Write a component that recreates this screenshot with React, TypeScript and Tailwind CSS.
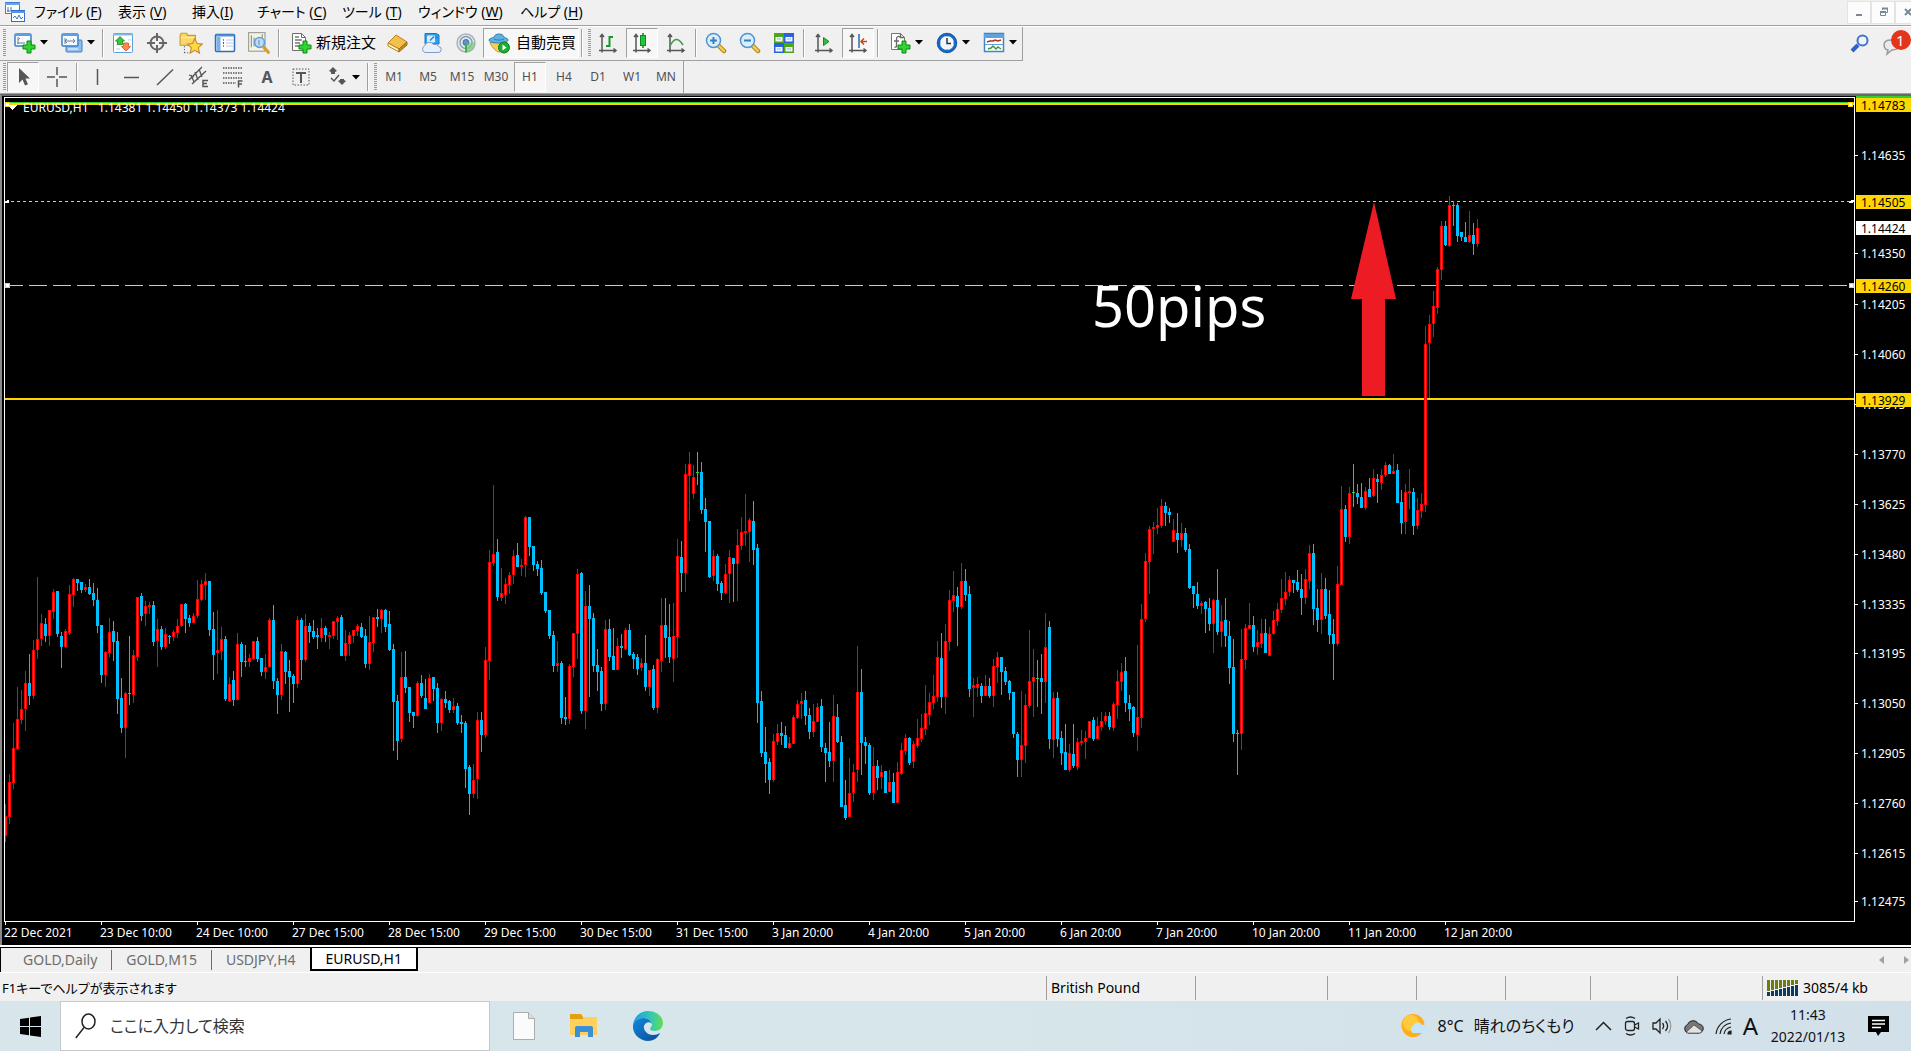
import React from "react";

type Children = { children: React.ReactNode };

/* ---------- Candle data ----------
   One entry per hour: colour letter, then high, body top, body bottom, low.
   Values are depths below the reference level, three units to a pixel. */
const SERIES = `
r1032,1068,1128,1146 r942,966,1071,1092 r789,864,969,987 r681,777,867,870 r690,747,780,792 r633,669,747,813
b582,669,708,735 r540,570,708,717 r351,537,570,597 r462,489,537,558 b474,492,528,546 r450,450,528,558
r387,396,456,477 b393,393,522,531 b516,528,561,624 r507,513,561,564 r375,402,519,525 r354,357,405,441
b357,357,369,393 b366,366,390,399 r372,381,390,396 b357,381,402,405 b369,399,420,438 b384,420,498,519
b495,495,645,669 r573,576,645,681 r474,516,579,591 b483,513,546,603 b516,543,717,762 b654,714,804,819
r696,699,804,894 g528,699,702,735 r570,585,705,729 r411,411,591,603 b399,408,468,483 r423,438,462,498
r426,435,441,462 b423,435,546,558 r477,507,543,621 b498,507,561,570 r504,522,561,567 b525,528,531,552
r510,516,531,543 r477,498,519,534 r432,432,498,501 b429,432,477,519 b465,474,489,501 r459,468,489,489
r360,417,468,474 r360,372,420,423 r339,363,375,420 b363,363,510,528 b456,507,585,660 r450,570,579,642
r501,537,573,600 b528,537,717,723 r651,672,723,726 b633,660,720,738 r519,552,720,720 b546,552,606,651
b555,603,606,621 r582,594,606,621 r543,543,597,600 b531,543,597,606 b594,594,636,648 r582,621,636,657
r474,480,621,621 b435,480,663,687 b654,663,705,762 r552,573,705,720 b573,576,636,672 b600,633,651,756
b642,648,672,729 r468,480,672,684 b474,480,600,660 r462,498,600,606 b489,498,516,549 b480,513,531,537
b504,525,531,567 r474,504,534,546 b498,504,525,546 r516,525,531,567 r483,483,528,537 r468,474,486,540
b465,471,588,588 r510,549,588,603 r516,525,552,588 r510,510,528,549 r492,498,513,528 b489,501,531,534
b507,528,612,624 r468,546,612,630 r471,471,549,576 b447,471,477,501 r447,450,477,519 b447,450,501,516
b453,492,570,573 b552,567,726,873 b705,723,843,900 r576,651,837,846 b573,651,684,699 b681,681,759,786
b756,756,768,804 r663,669,768,771 b645,669,708,714 b657,714,747,747 r642,654,729,729 b651,651,687,723
b669,684,789,819 r714,717,789,813 b693,717,729,744 b720,723,750,759 r714,738,750,759 b729,738,789,795
b765,786,792,819 b783,789,927,984 b915,921,1002,1065 r912,960,1002,1014 r756,780,957,1017 b756,780,825,876
r561,600,825,834 r270,306,603,660 r75,282,309,318 b237,276,411,423 r324,399,414,423 r354,372,405,432
r336,345,375,402 r270,288,345,372 b249,285,321,321 r297,315,321,348 r168,171,315,351 b171,171,261,288
b258,258,315,333 b303,312,327,348 b300,324,399,405 b396,396,453,459 b450,450,528,537 b513,525,618,636
r543,609,618,636 b603,609,774,792 b711,771,777,795 r612,618,777,792 r519,519,621,651 r327,342,522,597
b336,339,753,762 r393,438,753,807 b375,438,477,711 b459,474,618,636 b567,615,636,693 b621,633,732,753
r480,507,732,750 b477,507,591,603 b504,588,630,630 r534,558,630,630 b522,558,564,594 r504,510,567,570
b492,510,585,588 b576,582,597,627 b582,591,627,645 r594,609,624,633 b525,609,681,693 r630,630,681,708
b615,627,744,750 r594,597,744,759 r414,495,603,636 b414,495,534,594 b432,531,591,609 r429,528,597,666
r237,288,531,594 b243,291,339,396 r12,42,339,396 r-24,12,48,183 r15,51,102,117 g-24,36,39,75
b6,36,150,162 b114,147,186,276 b183,183,351,354 r270,288,348,363 b282,288,372,393 b363,369,399,420
r312,342,399,402 r270,291,342,429 b294,294,312,426 r207,255,312,423 r171,216,258,270 r102,213,219,258
r174,180,216,306 b123,183,270,315 b252,264,729,789 b693,723,879,891 b801,876,912,969 b894,906,960,1002
r822,843,960,966 r792,819,846,855 b786,819,828,855 b798,825,864,864 r831,849,864,867 r765,771,852,852
r720,732,774,777 r699,723,732,777 b693,720,768,795 b744,765,816,837 r732,783,816,831 r729,741,786,786
b717,738,861,876 b849,864,879,966 b786,876,903,921 r705,768,903,966 b732,771,846,849 b828,846,1041,1041
b960,1035,1074,1080 r894,999,1071,1071 r912,936,999,1026 r558,696,930,966 b627,696,849,945 b831,846,858,912
b849,855,999,1005 r861,918,999,1020 b900,918,954,990 r915,936,951,987 b933,933,999,999 r930,966,996,996
b939,966,1029,1029 r906,936,1029,1029 r849,870,942,945 r822,834,873,885 b831,834,909,915 r843,852,906,924
r777,834,858,864 r762,804,837,846 r675,759,807,825 r699,726,765,795 r645,708,729,747 r543,591,711,726
b519,594,711,744 r492,543,711,762 r390,420,546,573 r333,405,423,456 b381,408,441,558 r309,363,441,447
b327,363,405,423 b378,402,687,711 r654,675,684,771 r651,672,684,711 b669,678,708,729 r645,678,708,708
b654,678,708,714 r597,618,708,741 r576,591,621,669 b591,591,636,705 b621,633,666,675 b660,663,699,720
b696,696,822,834 b816,822,900,951 r693,855,900,951 r702,735,858,909 r510,663,738,744 r567,651,666,771
g600,654,657,741 b582,654,666,762 r459,561,666,729 b483,501,837,867 r696,714,840,894 b696,714,837,861
b813,834,879,915 b792,876,930,930 r852,879,930,936 b792,882,918,924 r834,846,921,930 r810,843,849,858
r813,834,846,897 r783,783,834,834 b771,780,837,843 r771,798,837,837 r756,783,801,813 r756,768,783,795
b756,768,801,810 r726,732,804,813 r630,663,735,777 r609,636,666,693 b591,633,729,756 b705,729,747,783
b738,741,819,831 r555,771,825,873 r432,477,774,804 r279,303,477,486 r198,207,306,402 r186,201,207,282
r144,195,204,222 r117,138,198,204 b126,138,159,198 b144,156,165,189 r177,210,246,246 b159,219,240,279
r189,219,240,261 b204,219,270,276 b252,267,384,387 b378,378,402,444 b366,402,438,447 r423,429,438,462
b423,426,447,519 b414,444,492,513 r417,420,492,579 b327,420,516,525 r435,483,516,561 b414,480,528,561
b483,528,624,672 b537,621,822,846 b810,819,822,945 r507,597,822,870 r492,504,600,627 r429,495,507,507
b468,495,561,576 r510,546,561,585 r477,519,552,564 b477,519,579,579 r501,522,588,588 r453,480,522,525
r429,447,483,498 r357,414,450,459 r336,396,417,435 r348,360,396,408 b360,360,369,399 b330,366,390,396
b342,387,414,465 r327,357,414,432 r255,279,363,387 b252,279,447,495 b387,444,480,516 r339,387,480,522
b354,387,468,477 b390,462,525,552 b477,522,552,660 r318,372,552,558 r78,147,375,375 b135,147,231,246
r81,99,231,252 g12,96,99,141 b72,99,111,132 b69,111,144,144 r81,93,144,150 b54,87,111,111
r27,54,108,111 b42,57,66,129 r27,45,69,90 r6,15,45,51 b12,15,42,42 r-18,33,42,42
b12,30,129,129 b90,126,189,222 r72,96,186,222 r27,93,99,147 b84,96,198,225 r114,150,198,207
r99,132,153,174 r-402,-348,135,156 r-435,-408,-351,-186 r-507,-462,-408,-369 r-579,-573,-456,-438 r-717,-702,-570,-540
b-717,-702,-645,-642 r-792,-765,-642,-639 b-777,-765,-762,-702 b-771,-765,-672,-654 b-684,-684,-669,-657 b-714,-669,-654,-654
r-747,-675,-654,-651 b-711,-675,-648,-615 r-723,-696,-648,-639`;

const LEVEL = 362;

function buildPaths() {
  const outline: Record<string, string> = { r: "", b: "", g: "" };
  const core: Record<string, string> = { r: "", b: "", g: "" };
  SERIES.trim().split(/\s+/).forEach((entry, i) => {
    const key = entry[0];
    const [hi, top, bottom, lo] = entry.slice(1).split(",").map((v) => LEVEL + Math.round(Number(v) / 3));
    const x = 4 * i;
    outline[key] += `M${x} ${hi}h1V${lo}h-1zM${x - 1} ${top}h3V${bottom}h-3z`;
    if (bottom - top > 2) core[key] += `M${x} ${top + 1}h1V${bottom - 1}h-1z`;
  });
  return { outline, core };
}
const PATHS = buildPaths();

const AXIS_PRICES = [1.14635, 1.1435, 1.14205, 1.1406, 1.13915, 1.1377, 1.13625, 1.1348, 1.13335, 1.13195, 1.1305, 1.12905, 1.1276, 1.12615, 1.12475];
const MARKED = [
  { price: 1.14783, y: 2, fill: "#ffd700" },
  { price: 1.14505, y: 99, fill: "#ffd700" },
  { price: 1.14424, y: 125, fill: "#ffffff" },
  { price: 1.1426, y: 183, fill: "#ffd700" },
  { price: 1.13929, y: 297, fill: "#ffd700" },
];
const DATES = ["22 Dec 2021", "23 Dec 10:00", "24 Dec 10:00", "27 Dec 15:00", "28 Dec 15:00", "29 Dec 15:00", "30 Dec 15:00", "31 Dec 15:00", "3 Jan 20:00", "4 Jan 20:00", "5 Jan 20:00", "6 Jan 20:00", "7 Jan 20:00", "10 Jan 20:00", "11 Jan 20:00", "12 Jan 20:00"];

function priceToY(price: number) {
  return Math.round(59 + (1.14635 - price) * 34560);
}

/* ---------- Shared pieces ---------- */

function Svg({ children, size = 22, label }: Children & { size?: number; label?: string }) {
  return (
    <svg width={size} height={size} viewBox="0 0 22 22" fill="none" className="shrink-0" aria-label={label}>
      {children}
    </svg>
  );
}

function Grip() {
  return (
    <svg width="3" height="28" className="ml-[3px] shrink-0 self-center" shapeRendering="crispEdges" aria-hidden="true">
      {Array.from({ length: 14 }, (_, i) => (
        <rect key={i} x="0" y={i * 2} width="3" height="1" fill="#9a9a9a" />
      ))}
    </svg>
  );
}

function Sep() {
  return <span className="mx-0.5 h-7 w-0.5 shrink-0 self-center border-r border-l border-r-white border-l-[#a0a0a0]" />;
}

function Tool({ label, pressed, children }: Children & { label: string; pressed?: boolean }) {
  return (
    <button type="button" aria-label={label} className="flex w-[34px] shrink-0 items-center justify-center">
      {pressed ? (
        <span className="flex h-[30px] w-8 items-center justify-center border border-t-[#a0a0a0] border-r-white border-b-white border-l-[#a0a0a0] bg-[#f7f7f7]">{children}</span>
      ) : (
        children
      )}
    </button>
  );
}

function DropTool({ label, children }: Children & { label: string }) {
  return (
    <button type="button" aria-label={label} className="flex w-[47px] shrink-0 items-center gap-1 pl-2">
      {children}
      <svg width="8" height="5" className="shrink-0" aria-hidden="true">
        <path d="M0 0h8L4 4.5z" fill="#000" />
      </svg>
    </button>
  );
}

/* ---------- Icons ---------- */

function PlusMark({ x, y }: { x: number; y: number }) {
  return <path d={`M${x + 4} ${y}h4v4h4v4h-4v4h-4v-4h-4v-4h4z`} fill="#2fd42f" stroke="#0a8a14" strokeWidth="1" />;
}

const axes = <path d="M5 2.5v18M2 18.500h17M3 5l2-2.500 2 2.500M16.500 16.500l2.500 2-2.500 2" stroke="#555" strokeWidth="1.500" />;

function AppIcon() {
  return (
    <Svg>
      <rect x="1.500" y="1.500" width="14" height="11" fill="#fff" stroke="#3f7fd0" />
      <path d="M1 3h15" stroke="#6aa2e8" strokeWidth="2" />
      <path d="M4 6v5M3 10h9M7 6v3" stroke="#4472b8" />
      <rect x="7.500" y="9.500" width="13" height="11" fill="#fff" stroke="#2c6fd0" />
      <path d="M7 11h14" stroke="#5b94e6" strokeWidth="2" />
      <path d="M9 17l2-2 2 3 2-4 2 4 2-2" stroke="#4472b8" />
    </Svg>
  );
}
function NewChartIcon() {
  return (
    <Svg>
      <rect x="1" y="2" width="16" height="12" rx="1" fill="#f4faff" stroke="#3b7fc4" strokeWidth="1.500" />
      <path d="M1 3h16" stroke="#5d9fe0" strokeWidth="2" />
      <path d="M4 5v7M3 11h8M4 8l2-2" stroke="#6d8196" />
      <PlusMark x={9} y={9} />
    </Svg>
  );
}
function ProfilesIcon() {
  return (
    <Svg>
      <rect x="5" y="8" width="16" height="12" rx="1" fill="#8fbdf0" stroke="#3b7fc4" />
      <rect x="1" y="2" width="16" height="12" rx="1" fill="#f4faff" stroke="#3b7fc4" strokeWidth="1.500" />
      <path d="M1 3h16" stroke="#5d9fe0" strokeWidth="2" />
      <path d="M4 9h10M4 9l2-2M4 9l2 2M14 9l-2-2M14 9l-2 2M4 6v6" stroke="#6d8196" />
      <path d="M7 17h10" stroke="#fff" />
    </Svg>
  );
}
function MarketIcon() {
  return (
    <Svg>
      <rect x="1.500" y="1.500" width="19" height="19" rx="1" fill="#fff" stroke="#5b9fdd" />
      <path d="M1 2.500h20" stroke="#7db8ee" strokeWidth="2" />
      <path d="M4 10h2M4 13h2M16 8h3M4 17h4" stroke="#c5cdd6" />
      <path d="M8 4.500l4.500 4.500h-2v3.500h-5V9h-2z" fill="#3fc43f" stroke="#138a18" strokeWidth=".8" />
      <path d="M14 19l-4.500-4.500h2V11h5v3.500h2z" fill="#ff8a50" stroke="#d4501a" strokeWidth=".8" />
    </Svg>
  );
}
function DataIcon() {
  return (
    <Svg>
      <circle cx="11" cy="11" r="6.500" stroke="#666" strokeWidth="2" />
      <path d="M11 1v8M11 13v8M1 11h8M13 11h8" stroke="#666" strokeWidth="2" />
    </Svg>
  );
}
function FolderStarIcon() {
  return (
    <Svg size={24}>
      <path d="M1 4l1-2h5l1 2h7v9H1z" fill="#fbd66b" stroke="#c99b2c" />
      <path d="M2 6h12" stroke="#fff0b0" />
      <path d="M5 14v7M5 20h5" stroke="#555" strokeDasharray="1 1.500" />
      <path d="M14.500 7l2 4.500 4.800.5-3.600 3.300 1.100 4.900-4.300-2.500-4.300 2.500 1.100-4.900L7.700 12l4.800-.5z" fill="#ffd94a" stroke="#c68a1a" />
    </Svg>
  );
}
function NavigatorIcon() {
  return (
    <Svg>
      <rect x="1.500" y="2.500" width="19" height="17" rx="1" fill="#fff" stroke="#2f6db5" strokeWidth="1.500" />
      <path d="M2 3.500h18" stroke="#4e92dc" strokeWidth="2" />
      <path d="M4.500 5v14" stroke="#7eb0ea" strokeWidth="4" />
      <path d="M9 8h1M9 14h1" stroke="#e03030" strokeWidth="1.500" />
      <path d="M12 8h7M12 11h7M12 14h7" stroke="#b9c9e0" />
      <path d="M9 11h1" stroke="#222" strokeWidth="1.500" />
    </Svg>
  );
}
function TesterIcon() {
  return (
    <Svg size={24}>
      <rect x="1.500" y="1.500" width="15" height="17" fill="#f3f3ea" stroke="#9a9a90" />
      <path d="M4 4v11M6.500 6v8M14 3v5" stroke="#8d8d84" />
      <circle cx="11.500" cy="10.500" r="4.500" fill="#b7dcfa" fillOpacity=".9" stroke="#5d9fd6" strokeWidth="1.500" />
      <path d="M11 8v5" stroke="#7d8d9c" />
      <path d="M15.500 15l4 4.500" stroke="#d9a028" strokeWidth="3" strokeLinecap="round" />
    </Svg>
  );
}
function OrderIcon() {
  return (
    <Svg>
      <path d="M2.500 1.500h9l4 4v13h-13z" fill="#fff" stroke="#6e6e6e" />
      <path d="M11.500 1.500v4h4" stroke="#6e6e6e" />
      <path d="M5 5h4M5 8h7M5 11h5M5 14h4" stroke="#777" strokeWidth="1.500" />
      <PlusMark x={9} y={9} />
    </Svg>
  );
}
function BookIcon() {
  return (
    <Svg>
      <path d="M9 3l11 7-8 7L1 11z" fill="#f3c04c" stroke="#b9801c" />
      <path d="M1 11v3l11 6v-3z" fill="#fff2c4" stroke="#b9801c" />
      <path d="M12 17l8-7v3l-8 7z" fill="#c98c1e" stroke="#a06c12" />
    </Svg>
  );
}
function VpsIcon() {
  return (
    <Svg>
      <path d="M4 1.500h11l3 1.500v9H4z" fill="#2fa1ec" stroke="#1a74c4" />
      <rect x="6" y="3.500" width="8" height="7" rx="1" fill="#d5efff" />
      <path d="M9 8.500l4-4M14 5l3 1" stroke="#2785d8" strokeWidth="1.500" />
      <path d="M4 20.500a3.500 3.500 0 01-.5-6.500 5 5 0 019-1.500 4 4 0 015 2 3 3 0 01-.5 6z" fill="#e6effa" stroke="#7f9cc4" />
    </Svg>
  );
}
function SignalIcon() {
  return (
    <Svg>
      <circle cx="11" cy="11" r="9" fill="#e4ebe8" stroke="#a9b4b8" strokeWidth="1.500" />
      <circle cx="11" cy="10.500" r="6" stroke="#84a0b8" strokeWidth="1.500" />
      <circle cx="11" cy="10.500" r="3" fill="#5b93d6" stroke="#416fae" />
      <path d="M12 12l8-2a9 9 0 01-8 10z" fill="#7cc87c" fillOpacity=".7" />
      <path d="M11 11v9.500" stroke="#37b637" strokeWidth="2" />
    </Svg>
  );
}
function AutoIcon() {
  return (
    <Svg>
      <path d="M2 10c0 3 6 10 9 10s8-5 8-10z" fill="#f5cf5a" stroke="#c6962a" />
      <path d="M1 8c0-2 5-2 5-3 1-4 9-4 10 0 0 1 4 1 4 3s-4 3-9.500 3S1 10 1 8z" fill="#5db2e2" stroke="#2c7fb4" />
      <path d="M6 7c3 1.500 7 1.500 10 0" stroke="#2c7fb4" />
      <circle cx="16" cy="15.500" r="5.500" fill="#1eae32" stroke="#0d7f1e" />
      <path d="M14.500 12.500v6l4-3z" fill="#fff" />
    </Svg>
  );
}
function BarsIcon() {
  return <Svg>{axes}<path d="M12.500 4v11M12.500 5h3.500M9 14h3.500" stroke="#16962c" strokeWidth="2" /></Svg>;
}
function CandleIcon() {
  return <Svg>{axes}<path d="M12 1v15" stroke="#0f7d1e" strokeWidth="1.500" /><rect x="9.500" y="3.500" width="5" height="10" fill="#22c53c" stroke="#0f8a20" /></Svg>;
}
function LineIcon() {
  return <Svg>{axes}<path d="M5 14c4-8 8-9 13-1" stroke="#3d9a4a" strokeWidth="1.500" /></Svg>;
}
function ZoomIcon({ plus }: { plus?: boolean }) {
  return (
    <Svg>
      <path d="M14 14l5 5" stroke="#a87a18" strokeWidth="4.500" strokeLinecap="round" />
      <path d="M14 14l5 5" stroke="#f4cc4c" strokeWidth="2.500" strokeLinecap="round" />
      <circle cx="8.500" cy="8.500" r="7" fill="#d9eefc" stroke="#4f94d0" strokeWidth="1.500" />
      <path d={plus ? "M5 8.500h7M8.500 5v7" : "M5 8.500h7"} stroke="#3c7cb8" strokeWidth="2" />
    </Svg>
  );
}
function TileIcon() {
  return (
    <Svg>
      <path d="M1 1h10v10H1zM11 11h10v10H11z" fill="#4aa818" />
      <path d="M11 1h10v10H11zM1 11h10v10H1z" fill="#2a62d8" />
      <path d="M2.500 5h7v4.500h-7zM12.500 5h7v4.500h-7zM2.500 15h7v4.500h-7zM12.500 15h7v4.500h-7z" fill="#f2f6ff" />
      <path d="M4 7h4M14 7h4M4 17h4M14 17h4" stroke="#9db4d8" />
    </Svg>
  );
}
function ScrollIcon() {
  return <Svg>{axes}<path d="M10.500 5.500v8l5.500-4z" fill="#2fbf3c" stroke="#128a20" /></Svg>;
}
function ShiftIcon() {
  return <Svg>{axes}<path d="M12 2v14" stroke="#2a6ba8" strokeWidth="1.500" /><path d="M20 9.500h-6M17 6.500l-3 3 3 3" stroke="#c8451a" strokeWidth="1.500" /></Svg>;
}
function IndicatorIcon() {
  return (
    <Svg>
      <path d="M2.500 1.500h9l4 4v12h-13z" fill="#fff" stroke="#777" />
      <path d="M11.500 1.500v4h4M11 5c-2-1.500-3.500 0-3.500 2v7c0 1-1 1.500-2 1M5 9h5" stroke="#666" strokeWidth="1.300" />
      <PlusMark x={9} y={9} />
    </Svg>
  );
}
function ClockIcon() {
  return (
    <Svg>
      <circle cx="11" cy="11" r="8.500" fill="#f2f7fc" stroke="#1668c8" strokeWidth="3" />
      <circle cx="11" cy="11" r="9.800" stroke="#0d4a98" strokeWidth=".7" />
      <path d="M11 6v5.500h4" stroke="#333" strokeWidth="1.500" />
      <path d="M11 4v1M11 17v1M4 11h1M17 11h1" stroke="#888" />
    </Svg>
  );
}
function TemplateIcon() {
  return (
    <Svg>
      <rect x="1.500" y="1.500" width="19" height="18" fill="#fff" stroke="#3f86c8" strokeWidth="1.500" />
      <path d="M1 4h20" stroke="#5fa2e0" strokeWidth="4" />
      <path d="M2 12.500h18" stroke="#5fa2e0" />
      <path d="M4 10l3-1h3l2-1 3 1 3-1" stroke="#b03020" strokeWidth="1.500" />
      <path d="M5 17l3-1 2-2 3 3 2-2 3 2" stroke="#3a9a3a" strokeWidth="1.500" />
    </Svg>
  );
}

/* ---------- Bars ---------- */

const MENUS = [
  { name: "ファイル", key: "F", width: "w-[84px]" },
  { name: "表示", key: "V", width: "w-[74px]" },
  { name: "挿入", key: "I", tight: true, width: "w-[65px]" },
  { name: "チャート", key: "C", width: "w-[85px]" },
  { name: "ツール", key: "T", width: "w-[76px]" },
  { name: "ウィンドウ", key: "W", width: "w-[102px]" },
  { name: "ヘルプ", key: "H", width: "w-20" },
];

function MenuBar() {
  return (
    <header className="flex h-[27px] shrink-0 items-center overflow-hidden border-b border-white pb-0.5 pl-1 shadow-[inset_0_-1px_0_#a0a0a0]">
      <AppIcon />
      <nav className="ml-2 flex">
        {MENUS.map((m) => (
          <button key={m.key} type="button" className={`${m.width} text-left text-sm whitespace-nowrap [font-feature-settings:'palt']`}>
            {m.name}
            {m.tight ? "" : " "}(<span className="underline underline-offset-2">{m.key}</span>)
          </button>
        ))}
      </nav>
      <div className="-mr-2 ml-auto flex shrink-0">
        <WindowButton label="最小化"><path d="M8 14h6" stroke="#7a8896" strokeWidth="2" /></WindowButton>
        <WindowButton label="元に戻す"><path d="M10.500 9V7.500h5v4H14" stroke="#7a8896" /><path d="M10 7.500h6" stroke="#7a8896" strokeWidth="2" /><path d="M8.500 10.500h5v4h-5z" stroke="#7a8896" /><path d="M8 11h6" stroke="#7a8896" strokeWidth="2" /></WindowButton>
        <WindowButton label="閉じる"><path d="M9 8l6 6M15 8l-6 6" stroke="#7a8896" strokeWidth="2" /></WindowButton>
      </div>
    </header>
  );
}

function WindowButton({ label, children }: Children & { label: string }) {
  return (
    <button type="button" aria-label={label} className="flex h-[23px] w-6 items-center justify-center border border-[#e3e3e3] bg-[#fcfcfc]">
      <Svg>{children}</Svg>
    </button>
  );
}

function MainToolbar() {
  return (
    <div className="flex h-[34px] shrink-0">
      <div role="toolbar" aria-label="標準" className="flex border-r border-b border-[#a0a0a0] pb-0.5">
        <Grip />
        <DropTool label="新規チャート"><NewChartIcon /></DropTool>
        <DropTool label="プロファイル"><ProfilesIcon /></DropTool>
        <Sep />
        <Tool label="気配値"><MarketIcon /></Tool>
        <Tool label="データウィンドウ"><DataIcon /></Tool>
        <Tool label="ナビゲーター"><FolderStarIcon /></Tool>
        <Tool label="ターミナル"><NavigatorIcon /></Tool>
        <Tool label="ストラテジーテスター"><TesterIcon /></Tool>
        <Sep />
        <button type="button" className="flex w-[99px] shrink-0 items-center gap-1 pl-2 text-[15px] whitespace-nowrap">
          <OrderIcon />
          新規注文
        </button>
        <Tool label="メタエディター"><BookIcon /></Tool>
        <Tool label="VPS"><VpsIcon /></Tool>
        <Tool label="シグナル"><SignalIcon /></Tool>
        <button type="button" aria-pressed="true" className="flex h-[30px] w-24 shrink-0 items-center gap-1.5 self-center border border-t-[#a0a0a0] border-r-white border-b-white border-l-[#a0a0a0] bg-[#f7f7f7] pl-1 text-[15px] whitespace-nowrap">
          <AutoIcon />
          自動売買
        </button>
        <Sep />
        <Grip />
        <Tool label="バーチャート"><BarsIcon /></Tool>
        <Tool label="ローソク足" pressed><CandleIcon /></Tool>
        <Tool label="ラインチャート"><LineIcon /></Tool>
        <Sep />
        <Tool label="拡大"><ZoomIcon plus /></Tool>
        <Tool label="縮小"><ZoomIcon /></Tool>
        <Tool label="整列"><TileIcon /></Tool>
        <Sep />
        <Tool label="自動スクロール"><ScrollIcon /></Tool>
        <Tool label="チャートシフト" pressed><ShiftIcon /></Tool>
        <Sep />
        <DropTool label="インディケーター"><IndicatorIcon /></DropTool>
        <DropTool label="時間足"><ClockIcon /></DropTool>
        <DropTool label="テンプレート"><TemplateIcon /></DropTool>
      </div>
      <div className="ml-auto flex items-center gap-2">
        <button type="button" aria-label="検索">
          <Svg><path d="M3 18l6-6" stroke="#2f62c4" strokeWidth="4" /><circle cx="13.500" cy="7.500" r="5" fill="#f2f4fa" stroke="#3f72cc" strokeWidth="2" /></Svg>
        </button>
        <button type="button" aria-label="通知" className="relative mb-1 h-7 w-8">
          <svg width="32" height="28" viewBox="0 0 32 28">
            <path d="M12 12c-5 0-7 2.500-7 5s2 5 4 5l-1 4 5-4c4 0 8-2 8-5s-4-5-9-5z" fill="#e9e9ee" stroke="#9a9aa4" strokeWidth="1.500" />
            <circle cx="22" cy="12" r="10" fill="#e2361c" />
          </svg>
          <span className="absolute top-px left-[17px] text-[15px] text-white">1</span>
        </button>
      </div>
    </div>
  );
}

const FRAMES = ["M1", "M5", "M15", "M30", "H1", "H4", "D1", "W1", "MN"];
const INK = "#565656";

function DrawToolbar() {
  return (
    <div className="flex h-[33px] shrink-0 border-b border-[#a0a0a0]">
      <div role="toolbar" aria-label="ライン等" className="flex border-r border-[#a0a0a0]">
        <Grip />
        <Tool label="カーソル" pressed><Svg><path d="M7 2v15l3.500-3.500 2.500 6 3-1.300-2.600-5.700H18z" fill={INK} /></Svg></Tool>
        <Tool label="クロスヘア"><Svg><path d="M11 1v8M11 13v8M1 11h8M13 11h8" stroke={INK} strokeWidth="1.500" /></Svg></Tool>
        <Sep />
        <Tool label="垂直線"><Svg><path d="M11.500 3v16" stroke={INK} strokeWidth="1.500" /></Svg></Tool>
        <Tool label="水平線"><Svg><path d="M4 11.500h15" stroke={INK} strokeWidth="1.500" /></Svg></Tool>
        <Tool label="トレンドライン"><Svg><path d="M3 19L19 3.500" stroke={INK} strokeWidth="1.500" /></Svg></Tool>
        <Tool label="チャネル"><Svg><path d="M1 14L14 1M4 18L18 5M3 9l3 7M7 6l3 8M11 3l3 8M1 9l5 2M6 16l10-9" stroke={INK} strokeWidth="1.300" /><path d="M20 14.500h-5v6h5M15 17.500h4" stroke={INK} strokeWidth="1.500" /></Svg></Tool>
        <Tool label="フィボナッチ"><Svg><path d="M1 2h19M1 7h19M1 12h19M1 17h13" stroke={INK} strokeWidth="1.500" strokeDasharray="1.500 1" /><path d="M20.500 15h-4v6.500M16.500 18h3.500" stroke={INK} strokeWidth="1.500" /></Svg></Tool>
        <Tool label="テキスト"><span className="text-base font-bold text-[#565656]">A</span></Tool>
        <Tool label="テキストラベル"><Svg><rect x="3" y="3" width="16" height="16" stroke={INK} strokeDasharray="1.500 1.500" /><path d="M6 7h10M11 7v10" stroke={INK} strokeWidth="2" /></Svg></Tool>
        <DropTool label="矢印"><Svg><path d="M7 1l4 4-2 1v2H5V6L3 5zM16 19l-4-4 2-1v-1h4v1l2 1z" fill={INK} /><path d="M5 12l3 3 5-6" stroke={INK} strokeWidth="1.500" /></Svg></DropTool>
        <Sep />
        <Grip />
        {FRAMES.map((f) => (
          <Tool key={f} label={f} pressed={f === "H1"}>
            <span className="text-xs text-[#505050]">{f}</span>
          </Tool>
        ))}
      </div>
    </div>
  );
}

/* ---------- Chart ---------- */

function Anchor({ x, y }: { x: string; y: number }) {
  return (
    <svg x={x} y={y} width="5" height="5" overflow="visible">
      <rect width="5" height="5" fill="#ffd700" />
      <rect x="1" y="1" width="3" height="3" fill="#fff" />
    </svg>
  );
}

function Plot() {
  return (
    <svg className="min-w-0 flex-1" shapeRendering="crispEdges" role="img" aria-label="EURUSD H1 チャート">
      <rect y="4" width="100%" height="1" fill="#32cd32" />
      <rect y="5" width="100%" height="2" fill="#ffd700" />
      <line x1="0" x2="100%" y1="103.500" y2="103.500" stroke="#ffd700" strokeDasharray="3 3" />
      <line x1="0" x2="100%" y1="187.500" y2="187.500" stroke="#ffd700" strokeDasharray="18 6" />
      <rect y="300" width="100%" height="2" fill="#ffd700" />
      <path d={PATHS.outline.r} fill="#ff0000" />
      <path d={PATHS.core.r} fill="#ff4500" />
      <path d={PATHS.outline.b} fill="#00bfff" />
      <path d={PATHS.core.b} fill="#20b2e0" />
      <path d={PATHS.outline.g} fill="#32cd32" />
      <path d="M1369 104l22 97h-11v97h-23v-97h-11z" fill="#ed1c24" shapeRendering="geometricPrecision" />
      <Anchor x="0" y={4} />
      <Anchor x="0" y={185} />
      <path d="M0 105v-1l2-2h2v3z" fill="#fff" />
      <svg x="100%" overflow="visible">
        <Anchor x="-6" y={4} />
        <Anchor x="-5" y={185} />
        <path d="M-5 105v-1l2-2h3v1l-1 2z" fill="#fff" />
      </svg>
      <path d="M3 7h9l-4.500 5z" fill="#fff" />
      <text x="18" y="14" fill="#fff" className="text-xs" xmlSpace="preserve">EURUSD,H1&#160;&#160; 1.14381 1.14450 1.14373 1.14424</text>
      <text x="1087" y="229" fill="#fff" fontSize="56">50pips</text>
    </svg>
  );
}

function PriceAxis() {
  return (
    <svg className="w-14 shrink-0 text-xs" aria-label="価格軸">
      {AXIS_PRICES.map((p) => (
        <g key={p}>
          <rect y={priceToY(p)} width="3" height="1" fill="#fff" />
          <text x="6" y={priceToY(p) + 5} fill="#fff">{p.toFixed(5)}</text>
        </g>
      ))}
      <rect x="1" width="55" height="2" fill="#32cd32" />
      {MARKED.map((m) => (
        <g key={m.price}>
          <rect x="1" y={m.y} width="55" height="14" fill={m.fill} />
          <text x="6" y={m.y + 12} fill="#000">{m.price.toFixed(5)}</text>
        </g>
      ))}
    </svg>
  );
}

function Chart() {
  return (
    <main className="flex min-h-0 flex-1 flex-col border-t-2 border-l-2 border-t-[#696969] border-l-[#8a8a8a] bg-black">
      <div className="flex min-h-0 flex-1">
        <div className="mt-px ml-0.5 flex min-w-0 flex-1 border border-white">
          <Plot />
        </div>
        <PriceAxis />
      </div>
      <div className="ml-0.5 flex h-[23px] shrink-0 overflow-hidden text-xs text-white">
        {DATES.map((d) => (
          <div key={d} className="w-24 shrink-0 whitespace-nowrap">
            <div className="ml-px h-[3px] w-px bg-white" />
            <div className="leading-4">{d}</div>
          </div>
        ))}
      </div>
    </main>
  );
}

/* ---------- Footer ---------- */

function ChartTabs() {
  const tabs = ["GOLD,Daily", "GOLD,M15", "USDJPY,H4"];
  return (
    <div className="flex h-7 shrink-0 border-t-2 border-b border-white">
      <div role="tablist" className="flex flex-1 border-t border-l border-black pl-2 text-sm">
        {tabs.map((t, i) => (
          <button key={t} type="button" role="tab" className={i < 2 ? "my-0.5 border-r border-[#6d6d6d] px-3.5 leading-5 text-[#6d6d6d]" : "my-0.5 px-3.5 leading-5 text-[#6d6d6d]"}>{t}</button>
        ))}
        <button type="button" role="tab" aria-selected="true" className="mb-px border-r-2 border-b-2 border-l-2 border-black bg-white px-3.5 leading-5 text-black">EURUSD,H1</button>
        <div className="mr-0.5 ml-auto flex items-center gap-5">
          <svg width="5" height="8" aria-label="前へ"><path d="M5 0v8L0 4z" fill="#a0a0a0" /></svg>
          <svg width="5" height="8" aria-label="次へ"><path d="M0 0v8l5-4z" fill="#a0a0a0" /></svg>
        </div>
      </div>
    </div>
  );
}

function StatusBar() {
  const cells = ["w-[132px]", "w-[89px]", "w-[89px]", "w-[85px]", "w-[87px]", "w-[85px]"];
  return (
    <div className="flex h-7 shrink-0 items-center pt-0.5 text-sm">
      <div className="flex-1 pl-0.5 text-[13px] [font-feature-settings:'palt']">F1キーでヘルプが表示されます</div>
      <div className="h-6 w-[149px] border-l border-[#a0a0a0] pl-1 leading-6">British Pound</div>
      {cells.map((w, i) => (
        <div key={i} className={`${w} h-6 border-l border-[#a0a0a0]`} />
      ))}
      <div className="flex h-6 w-[149px] items-center gap-1 border-l border-[#a0a0a0] pl-1">
        <svg width="32" height="16" shapeRendering="crispEdges" aria-label="接続状態">
          {Array.from({ length: 8 }, (_, i) => (
            <g key={i}>
              <rect x={i * 4} y="0" width="3" height={11 - i} fill="#6b7d10" />
              <rect x={i * 4} y={12 - i} width="3" height={4 + i} fill="#0c3c60" />
            </g>
          ))}
        </svg>
        3085/4 kb
      </div>
    </div>
  );
}

function Taskbar() {
  return (
    <footer className="flex h-[50px] shrink-0 items-center bg-linear-to-r from-[#d8e6ec] via-[#d6e6ea] to-[#d2e0ea]">
      <button type="button" aria-label="スタート" className="flex w-[60px] items-center justify-center">
        <svg width="21" height="21" viewBox="0 0 21 21"><path d="M0 3l9-1.300V10H0zM10 1.500L21 0v10H10zM0 11h9v8.300L0 18zM10 11h11v10l-11-1.500z" fill="#000" /></svg>
      </button>
      <label className="flex h-[50px] w-[430px] items-center gap-3.5 border border-[#c4c9cc] bg-white pl-3.5">
        <svg width="21" height="26" viewBox="0 0 21 26" fill="none" aria-label="検索"><ellipse cx="13.500" cy="8.500" rx="6.500" ry="7.500" stroke="#222" strokeWidth="1.500" /><path d="M9 14.500L.8 25" stroke="#222" strokeWidth="1.500" /></svg>
        <input type="text" placeholder="ここに入力して検索" className="flex-1 bg-transparent text-base outline-none [font-feature-settings:'palt'] placeholder:text-[#333]" />
      </label>
      <div className="ml-[23px] flex items-center gap-[35px]">
        <button type="button" aria-label="ドキュメント">
          <svg width="22" height="28" viewBox="0 0 22 28"><path d="M.5.5h15l6 6v21H.5z" fill="#fbfbfb" stroke="#a8adb0" /><path d="M15.500.5v6h6" fill="#ddd" stroke="#a8adb0" /></svg>
        </button>
        <button type="button" aria-label="エクスプローラー">
          <svg width="28" height="24" viewBox="0 0 28 24"><path d="M0 1a1 1 0 011-1h10l2 3h14v18H0z" fill="#fdd15c" /><path d="M0 0h11l2 3v2H0z" fill="#e0a010" /><path d="M5 23v-9a2 2 0 012-2h14a2 2 0 012 2v9h-5v-5h-8v5z" fill="#3b8fd6" /></svg>
        </button>
        <button type="button" aria-label="Edge">
          <svg width="30" height="30" viewBox="0 0 30 30">
            <defs>
              <linearGradient id="edgeTop" x1="0" x2="1"><stop offset="0" stopColor="#1b9de2" /><stop offset=".6" stopColor="#35c8b4" /><stop offset="1" stopColor="#66dd50" /></linearGradient>
              <linearGradient id="edgeLow" x1="0" x2="1" y1="0" y2="1"><stop offset="0" stopColor="#1389dc" /><stop offset="1" stopColor="#0c4b9c" /></linearGradient>
            </defs>
            <path d="M0 14C1 5 8 0 15 0c9 0 15 6 15 12 0 5-4 8-8 8-3 0-5-1-5-2s2-2 2-5-4-6-9-6C5 7 1 10 0 14z" fill="url(#edgeTop)" />
            <path d="M0 14c1-4 5-7 10-7 4 0 8 2 9 6-2-3-7-2-8 2-1 5 4 9 9 9 3 0 5-1 7-2-2 5-7 8-12 8C7 30-1 23 0 14z" fill="url(#edgeLow)" />
          </svg>
        </button>
      </div>
      <div className="mr-[22px] ml-auto flex items-center text-[#111]">
        <button type="button" className="flex items-center gap-2.5 text-base whitespace-nowrap [font-feature-settings:'palt']">
          <svg width="27" height="26" viewBox="0 0 27 26"><circle cx="12" cy="12.500" r="11.500" fill="#fcae1c" /><circle cx="10" cy="10" r="8" fill="#ffcb3c" /><path d="M12 20a4 4 0 010-7 5 5 0 019-1 4 4 0 012 8z" fill="#c4e4fb" /></svg>
          <span>8°C</span>
          <span>晴れのちくもり</span>
        </button>
        <div className="ml-5 flex items-center gap-[11px]">
          <svg width="17" height="10" fill="none" aria-label="隠れているインジケーター"><path d="M1 9l7.500-7.500L16 9" stroke="#222" strokeWidth="1.500" /></svg>
          <svg width="18" height="20" viewBox="0 0 18 20" fill="none" stroke="#222" strokeWidth="1.300" aria-label="会議"><rect x="2.500" y="5.500" width="9" height="9" rx="2" /><path d="M11.500 9l4-2v6l-4-2M3 2.500c3-2 6-2 9 0M3 17.500c3 2 6 2 9 0" /></svg>
          <svg width="20" height="18" viewBox="0 0 20 18" fill="none" stroke="#222" strokeWidth="1.300" aria-label="音量"><path d="M1 6h3l4-4v14l-4-4H1zM10.500 6c1.500 2 1.500 4 0 6M13.500 4c2.500 3 2.500 7 0 10" /><path d="M16.500 2c3 4 3 10 0 14" stroke="#999" /></svg>
          <svg width="21" height="15" viewBox="0 0 21 15" aria-label="OneDrive"><path d="M5 14a4.500 4.500 0 01-.5-8.500A6 6 0 0115.500 5 4.500 4.500 0 0116 14z" fill="#777" stroke="#222" /><path d="M3 13.500L11 6l8 6c-.5 1.500-2 2-3 2H5z" fill="#e2e2e2" stroke="#222" strokeWidth=".5" /></svg>
          <svg width="17" height="17" viewBox="0 0 17 17" fill="none" stroke="#222" strokeWidth="1.200" aria-label="Wi-Fi"><path d="M1 16C2 8 8 2 16 1M5 16c1-6 5-10 11-11M9 16c.5-4 3-6 7-7" /><path d="M13 16c0-2 1-3 3-3v3z" fill="#222" /></svg>
          <span className="text-2xl">A</span>
        </div>
        <div className="ml-2.5 w-20 text-center text-sm leading-[22px]">
          <div>11:43</div>
          <div>2022/01/13</div>
        </div>
        <button type="button" aria-label="通知センター" className="ml-5">
          <svg width="21" height="20" viewBox="0 0 21 20"><path d="M0 0h21v16h-8l-3 4-2-4H0z" fill="#000" /><path d="M4 4.500h13M4 8h13M4 11.500h9" stroke="#fff" strokeWidth="1.300" /></svg>
        </button>
      </div>
    </footer>
  );
}

export default function App() {
  return (
    <div className="flex h-screen flex-col overflow-hidden bg-[#f0f0f0] font-['Noto_Sans','Noto_Sans_CJK_JP',sans-serif] text-black">
      <MenuBar />
      <MainToolbar />
      <DrawToolbar />
      <Chart />
      <ChartTabs />
      <StatusBar />
      <Taskbar />
    </div>
  );
}
